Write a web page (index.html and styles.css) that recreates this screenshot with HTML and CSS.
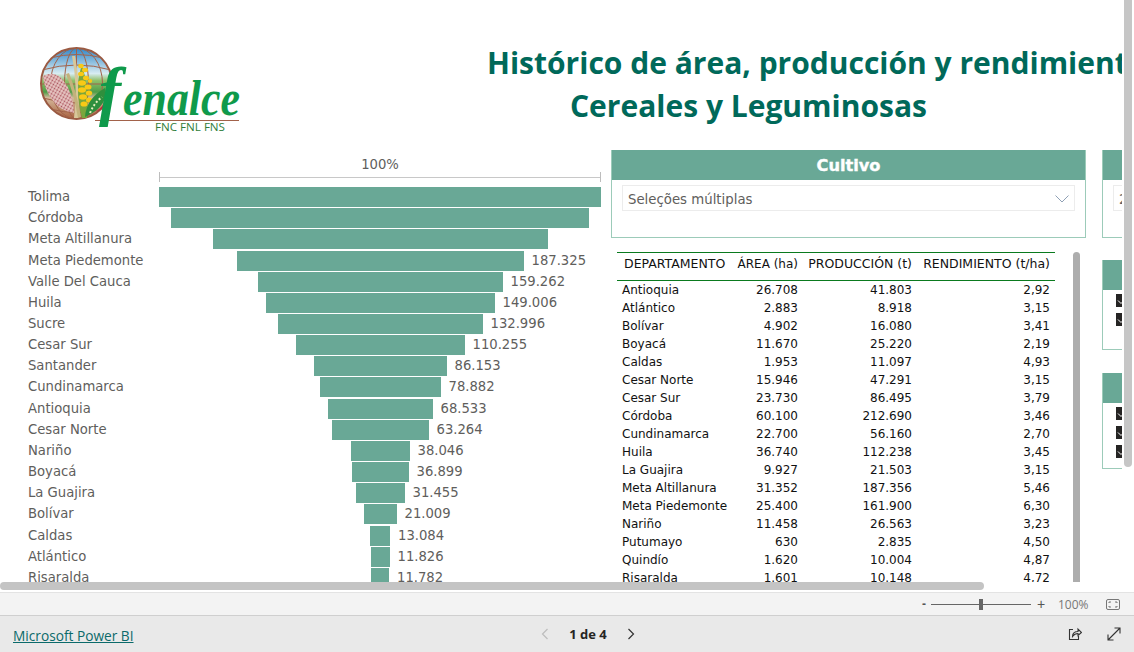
FILE: index.html
```html
<!DOCTYPE html>
<html lang="es">
<head>
<meta charset="utf-8">
<title>Fenalce - Power BI</title>
<link rel="stylesheet" href="styles.css">
</head>
<body>
<div class="viewport">
  <div class="report">
    <div class="canvas">
      <header class="header">
        <svg class="logo" viewBox="30 36 214 100" width="214" height="100">
          <defs>
            <linearGradient id="sky" x1="0" y1="0" x2="0" y2="1">
              <stop offset="0" stop-color="#2f86c8"/>
              <stop offset=".36" stop-color="#d8ecf2"/>
              <stop offset=".46" stop-color="#8fc06a"/>
              <stop offset=".62" stop-color="#4f9d48"/>
              <stop offset=".7" stop-color="#d5b99c"/>
              <stop offset="1" stop-color="#a8613f"/>
            </linearGradient>
            <pattern id="sorghum" width="3" height="3" patternUnits="userSpaceOnUse" patternTransform="rotate(30)">
              <rect width="3" height="3" fill="#e9c9c6"/>
              <circle cx="1.500" cy="1.500" r=".9" fill="#a9505a"/>
            </pattern>
            <clipPath id="globeClip"><circle cx="76.5" cy="83.5" r="35"/></clipPath>
          </defs>
          <circle cx="76.5" cy="83.5" r="35.5" fill="url(#sky)" stroke="#9a5a42" stroke-width="2"/>
          <g clip-path="url(#globeClip)" fill="none" stroke="#a2624a" stroke-width="1">
            <ellipse cx="76.5" cy="83.5" rx="12" ry="35.5"/>
            <ellipse cx="76.5" cy="83.5" rx="26" ry="35.5"/>
            <path d="M76.5 48v71"/>
            <path d="M42 70q34.500 -10 69 0M41 84h71M43 98q33.500 10 67 0M50 58q26.500 -7 53 0M50 109q26.500 7 53 0"/>
          </g>
          <path d="M43 76q12-6 20 4q10 12 11 33q-15-2-23-15q-7-10-8-22z" fill="url(#sorghum)"/>
          <path d="M72 56q6 30 2 62l4 0q3-32-3-62z" fill="#d8c79a"/>
          <path d="M66 74q8 20 12 44l3-1q-4-24-12-44z" fill="#c3b27c"/>
          <path d="M82 118q-8-28 0-54q8 28 5 54z" fill="#7aa63c"/>
          <g fill="#f9c916">
            <ellipse cx="81" cy="66" rx="2.800" ry="2.200"/><ellipse cx="85" cy="70" rx="3" ry="2.200"/>
            <ellipse cx="81" cy="74" rx="3" ry="2.200"/><ellipse cx="86" cy="78" rx="3" ry="2.200"/>
            <ellipse cx="82" cy="83" rx="4" ry="2.800"/><ellipse cx="88" cy="87" rx="3.500" ry="2.600"/>
            <ellipse cx="82" cy="90" rx="4" ry="2.800"/><ellipse cx="89" cy="93" rx="3.200" ry="2.600"/>
            <ellipse cx="83" cy="97" rx="4" ry="2.800"/><ellipse cx="89" cy="100" rx="3" ry="2.600"/>
            <ellipse cx="84" cy="104" rx="3.500" ry="2.600"/><ellipse cx="90" cy="81" rx="2.200" ry="2"/>
          </g>
          <path d="M85 117q1-18 20-29q4 18-20 29z" fill="#2f8f3d"/>
          <path d="M90 113q4-10 12-16" stroke="#e8f0c0" stroke-width="2" stroke-dasharray="2 2" fill="none"/>
          <path d="M96 112q8-6 10-14q3 8-10 14z" fill="#c4263c"/>
          <path d="M95 120.500h144" stroke="#a2624a" stroke-width="1.200"/>
          <text class="logo-f" x="99" y="113">f</text>
          <text class="logo-word" x="123" y="115" textLength="117" lengthAdjust="spacingAndGlyphs">enalce</text>
          <text class="logo-sub" x="155" y="131" textLength="70" lengthAdjust="spacingAndGlyphs">FNC FNL FNS</text>
        </svg>
        <div class="title">
          <div class="title-line">Histórico de área, producción y rendimiento</div>
          <div class="title-line title-second">Cereales y Leguminosas</div>
        </div>
      </header>
      <main class="main">
        <section class="funnel">
          <div class="funnel-top">100%</div>
          <div class="axis"><div class="axis-line"></div></div>
          <div class="rows">
            <div class="row"><span class="name">Tolima</span><div class="chart"><span></span><div class="bar" style="width:442px"></div><span></span></div></div>
            <div class="row"><span class="name">Córdoba</span><div class="chart"><span></span><div class="bar" style="width:418px"></div><span></span></div></div>
            <div class="row"><span class="name">Meta Altillanura</span><div class="chart"><span></span><div class="bar" style="width:335px"></div><span></span></div></div>
            <div class="row"><span class="name">Meta Piedemonte</span><div class="chart"><span></span><div class="bar" style="width:287px"></div><span class="val">187.325</span></div></div>
            <div class="row"><span class="name">Valle Del Cauca</span><div class="chart"><span></span><div class="bar" style="width:245px"></div><span class="val">159.262</span></div></div>
            <div class="row"><span class="name">Huila</span><div class="chart"><span></span><div class="bar" style="width:229px"></div><span class="val">149.006</span></div></div>
            <div class="row"><span class="name">Sucre</span><div class="chart"><span></span><div class="bar" style="width:205px"></div><span class="val">132.996</span></div></div>
            <div class="row"><span class="name">Cesar Sur</span><div class="chart"><span></span><div class="bar" style="width:169px"></div><span class="val">110.255</span></div></div>
            <div class="row"><span class="name">Santander</span><div class="chart"><span></span><div class="bar" style="width:133px"></div><span class="val">86.153</span></div></div>
            <div class="row"><span class="name">Cundinamarca</span><div class="chart"><span></span><div class="bar" style="width:121px"></div><span class="val">78.882</span></div></div>
            <div class="row"><span class="name">Antioquia</span><div class="chart"><span></span><div class="bar" style="width:105px"></div><span class="val">68.533</span></div></div>
            <div class="row"><span class="name">Cesar Norte</span><div class="chart"><span></span><div class="bar" style="width:97px"></div><span class="val">63.264</span></div></div>
            <div class="row"><span class="name">Nariño</span><div class="chart"><span></span><div class="bar" style="width:59px"></div><span class="val">38.046</span></div></div>
            <div class="row"><span class="name">Boyacá</span><div class="chart"><span></span><div class="bar" style="width:57px"></div><span class="val">36.899</span></div></div>
            <div class="row"><span class="name">La Guajira</span><div class="chart"><span></span><div class="bar" style="width:49px"></div><span class="val">31.455</span></div></div>
            <div class="row"><span class="name">Bolívar</span><div class="chart"><span></span><div class="bar" style="width:33px"></div><span class="val">21.009</span></div></div>
            <div class="row"><span class="name">Caldas</span><div class="chart"><span></span><div class="bar" style="width:20px"></div><span class="val">13.084</span></div></div>
            <div class="row"><span class="name">Atlántico</span><div class="chart"><span></span><div class="bar" style="width:19px"></div><span class="val">11.826</span></div></div>
            <div class="row"><span class="name">Risaralda</span><div class="chart"><span></span><div class="bar" style="width:18px"></div><span class="val">11.782</span></div></div>
          </div>
        </section>
        <section class="middle">
          <div class="panel panel-cultivo">
            <div class="panel-head">Cultivo</div>
            <div class="select">
              <span>Seleções múltiplas</span>
              <svg class="chev" viewBox="0 0 14 8" width="14" height="8"><path d="M.5.5 7 7l6.500-6.500" fill="none" stroke="#8fa0b5"/></svg>
            </div>
          </div>
          <div class="table-wrap">
            <table class="data">
              <colgroup><col class="c1"><col class="c2"><col class="c3"><col class="c4"></colgroup>
              <thead>
                <tr><th class="left">DEPARTAMENTO</th><th class="th-area">ÁREA (ha)</th><th>PRODUCCIÓN (t)</th><th>RENDIMIENTO (t/ha)</th></tr>
              </thead>
              <tbody>
                <tr><td>Antioquia</td><td>26.708</td><td>41.803</td><td>2,92</td></tr>
                <tr><td>Atlántico</td><td>2.883</td><td>8.918</td><td>3,15</td></tr>
                <tr><td>Bolívar</td><td>4.902</td><td>16.080</td><td>3,41</td></tr>
                <tr><td>Boyacá</td><td>11.670</td><td>25.220</td><td>2,19</td></tr>
                <tr><td>Caldas</td><td>1.953</td><td>11.097</td><td>4,93</td></tr>
                <tr><td>Cesar Norte</td><td>15.946</td><td>47.291</td><td>3,15</td></tr>
                <tr><td>Cesar Sur</td><td>23.730</td><td>86.495</td><td>3,79</td></tr>
                <tr><td>Córdoba</td><td>60.100</td><td>212.690</td><td>3,46</td></tr>
                <tr><td>Cundinamarca</td><td>22.700</td><td>56.160</td><td>2,70</td></tr>
                <tr><td>Huila</td><td>36.740</td><td>112.238</td><td>3,45</td></tr>
                <tr><td>La Guajira</td><td>9.927</td><td>21.503</td><td>3,15</td></tr>
                <tr><td>Meta Altillanura</td><td>31.352</td><td>187.356</td><td>5,46</td></tr>
                <tr><td>Meta Piedemonte</td><td>25.400</td><td>161.900</td><td>6,30</td></tr>
                <tr><td>Nariño</td><td>11.458</td><td>26.563</td><td>3,23</td></tr>
                <tr><td>Putumayo</td><td>630</td><td>2.835</td><td>4,50</td></tr>
                <tr><td>Quindío</td><td>1.620</td><td>10.004</td><td>4,87</td></tr>
                <tr><td>Risaralda</td><td>1.601</td><td>10.148</td><td>4,72</td></tr>
              </tbody>
            </table>
            <div class="table-thumb"></div>
          </div>
        </section>
        <aside class="side">
          <div class="panel panel-year">
            <div class="panel-head">Año</div>
            <div class="select select-year"><span>2022</span></div>
          </div>
          <div class="panel panel-a">
            <div class="panel-head">Semestre</div>
            <div class="checks">
              <div class="check"><svg viewBox="0 0 13 13" width="13" height="13"><path d="M2 6.500 5 9.500 11 3.500" fill="none" stroke="#fff"/></svg></div>
              <div class="check"><svg viewBox="0 0 13 13" width="13" height="13"><path d="M2 6.500 5 9.500 11 3.500" fill="none" stroke="#fff"/></svg></div>
            </div>
          </div>
          <div class="panel panel-b">
            <div class="panel-head">Región</div>
            <div class="checks">
              <div class="check"><svg viewBox="0 0 13 13" width="13" height="13"><path d="M2 6.500 5 9.500 11 3.500" fill="none" stroke="#fff"/></svg></div>
              <div class="check"><svg viewBox="0 0 13 13" width="13" height="13"><path d="M2 6.500 5 9.500 11 3.500" fill="none" stroke="#fff"/></svg></div>
              <div class="check"><svg viewBox="0 0 13 13" width="13" height="13"><path d="M2 6.500 5 9.500 11 3.500" fill="none" stroke="#fff"/></svg></div>
            </div>
          </div>
        </aside>
      </main>
    </div>
  </div>
  <div class="scroll-v"></div>
  <div class="scroll-h"></div>
</div>
<div class="zoombar">
  <span class="zoom-btn">-</span>
  <div class="slider"><div class="slider-thumb"></div></div>
  <span class="zoom-btn zoom-plus">+</span>
  <span class="zoom-val">100%</span>
  <svg class="fit" viewBox="0 0 14 11" width="14" height="11"><rect x=".5" y=".5" width="13" height="10" rx="1.500" fill="none" stroke="#777"/><path d="M3 4V3h2M9 3h2v1M3 7v1h2M9 8h2V7" fill="none" stroke="#777"/></svg>
</div>
<footer class="footer">
  <a class="pbi" href="#">Microsoft Power BI</a>
  <nav class="pager">
    <svg viewBox="0 0 8 12" width="8" height="12"><path d="M6.500 1 1.500 6l5 5" fill="none" stroke="#bdbdbd" stroke-width="1.200"/></svg>
    <span class="page-num">1 de 4</span>
    <svg viewBox="0 0 8 12" width="8" height="12"><path d="M1.500 1l5 5-5 5" fill="none" stroke="#333" stroke-width="1.200"/></svg>
  </nav>
  <div class="foot-icons">
    <svg viewBox="0 0 14 14" width="14" height="14"><path d="M5 2.500H1.500v10h9V9" fill="none" stroke="#333" stroke-width="1.100"/><path d="M4.500 9.500c0-3.500 2.500-5 5.500-5V2l3.500 3.500L10 8.500V6.500c-2.500 0-4 .8-5.500 3z" fill="none" stroke="#333" stroke-width="1.100"/></svg>
    <svg viewBox="0 0 14 14" width="14" height="14"><path d="M1 13 13 1M7.500 1H13v5.500M1 7.500V13h5.500" fill="none" stroke="#333" stroke-width="1.100"/></svg>
  </div>
</footer>
</body>
</html>
```

FILE: styles.css
```css
* { box-sizing: border-box; }
html, body { margin: 0; height: 100%; }
body {
  width: 1134px;
  height: 652px;
  overflow: hidden;
  display: flex;
  flex-direction: column;
  background: #fff;
  font-family: "DejaVu Sans", sans-serif;
  color: #605e5c;
}
.viewport { position: relative; height: 592px; flex: none; background: #fff; }
.report { width: 1122px; height: 582px; overflow: hidden; }
.canvas { width: 1300px; }

.header { display: flex; height: 150px; }
.logo { margin: 36px 0 0 30px; flex: none; }
.logo-f { font: italic 700 66px "Liberation Serif", serif; fill: #0f9a4b; }
.logo-word { font: italic 700 50px "Liberation Serif", serif; fill: #0f9a4b; }
.logo-sub { font: 400 10px "Open Sans", sans-serif; fill: #2f7d3a; }
.title {
  margin-left: 243px;
  padding-top: 41px;
  font: 700 30px/43px "Open Sans", sans-serif;
  color: #00695a;
  white-space: nowrap;
}
.title-second { padding-left: 83px; }

.main { display: flex; align-items: flex-start; }
.funnel { width: 611px; flex: none; padding-left: 28px; }
.funnel-top { margin-left: 131px; width: 442px; text-align: center; font-size: 13.2px; line-height: 16px; padding-top: 7px; height: 22px; }
.axis {
  margin-left: 131px; width: 442px; height: 10px;
  border-left: 1px solid #bdbdbd; border-right: 1px solid #bdbdbd;
  display: flex; align-items: center;
}
.axis-line { flex: 1; height: 1px; background: #c8c8c8; }
.rows { padding-top: 4.500px; }
.row { display: flex; align-items: center; height: 21.170px; font-size: 13.2px; white-space: nowrap; }
.name { width: 131px; flex: none; padding-bottom: 1px; }
.chart { width: 442px; flex: none; display: grid; grid-template-columns: minmax(0, 1fr) auto minmax(0, 1fr); align-items: center; }
.bar { height: 20px; background: #69a896; }
.val { margin-left: 8px; padding-bottom: 1px; }

.middle { width: 475px; flex: none; }
.panel { border: 1px solid #9ccbb9; border-top: 0; background: #fff; }
.panel-head {
  height: 30px; background: #69a896; color: #fff;
  font: 700 16.200px/31px "DejaVu Sans", sans-serif; text-align: center;
  -webkit-text-stroke: .4px #fff;
}
.panel-cultivo { height: 88px; }
.select {
  margin: 5px 10px 0; height: 26px; padding: 2px 5px 0;
  border: 1px solid #ececec;
  display: flex; align-items: center; justify-content: space-between;
  font-size: 13.3px; color: #605e5c;
}
.table-wrap { display: flex; align-items: flex-start; margin-top: 14px; padding-left: 6px; }
.data { width: 438px; border-collapse: collapse; table-layout: fixed; font-size: 12px; color: #111; }
.c1 { width: 115px; }
.c2 { width: 71px; }
.c3 { width: 114px; }
.c4 { width: 138px; }
.data th {
  height: 28px; padding: 0 5px 6px; font-weight: 400; font-size: 12.500px; text-align: right; white-space: nowrap;
  border-top: 1px solid #0a7a1e; border-bottom: 1px solid #0a7a1e;
}
.data th.left { text-align: left; padding-left: 7px; }
.data th.th-area { font-size: 12px; }
.data td { height: 18px; padding: 0 5px; text-align: right; white-space: nowrap; line-height: 18px; }
.data td:first-child { text-align: left; }
.table-thumb { width: 7px; height: 332px; margin-left: 18px; background: #adadad; border-radius: 4px 4px 0 0; flex: none; }

.side { margin-left: 16px; width: 200px; flex: none; }
.panel-year { height: 88px; }
.select-year { margin-right: 0; }
.panel-a { height: 90px; margin-top: 22px; }
.panel-b { height: 96px; margin-top: 23px; }
.checks { padding: 4px 0 0 13px; display: flex; flex-direction: column; gap: 6px; }
.check { width: 13px; height: 13px; background: #252423; display: flex; }

.scroll-v { position: absolute; left: 1124px; top: 0; width: 8px; height: 467px; background: #c6c6c6; border-radius: 0 0 4px 4px; }
.scroll-h { position: absolute; left: 0; top: 582px; width: 984px; height: 8px; background: #c4c4c4; border-radius: 4px; }

.zoombar {
  height: 24px; flex: none; background: #f3f3f3;
  border-top: 1px solid #e3e3e3; border-bottom: 1px solid #cfcfcf;
  display: flex; align-items: center; padding-left: 921px;
  font-size: 12px; color: #666;
}
.zoom-btn { width: 6px; font: 700 12px "Liberation Sans", sans-serif; color: #555; text-align: center; }
.slider { width: 100px; height: 1px; margin-left: 4px; background: #666; position: relative; }
.slider-thumb { position: absolute; left: 48px; top: -5px; width: 4px; height: 11px; background: #666; }
.zoom-plus { width: 8px; margin-left: 6px; font-size: 14px; font-weight: 400; }
.zoom-val { margin-left: 13px; font: 400 12px "Open Sans", sans-serif; color: #777; width: 30px; }
.fit { margin-left: 18px; }

.footer {
  flex: 1; background: #e9e9e9;
  display: grid; grid-template-columns: 1fr auto 1fr; align-items: center;
  padding: 0 13px;
}
.pbi { font: 400 13.700px "Open Sans", sans-serif; color: #0b6a6a; text-decoration: underline; padding-top: 2px; }
.pager { display: flex; align-items: center; gap: 20px; margin-left: 42px; }
.page-num { font: 700 13px "Open Sans", sans-serif; color: #252423; }
.foot-icons { display: flex; justify-content: flex-end; gap: 25px; }
```
